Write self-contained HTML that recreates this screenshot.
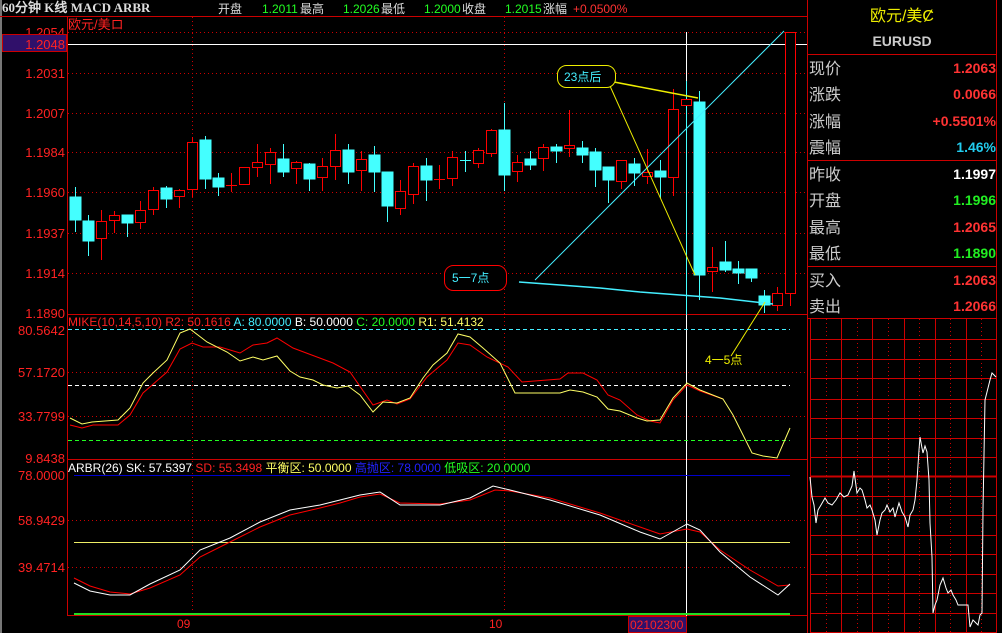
<!DOCTYPE html>
<html><head><meta charset="utf-8"><style>
html,body{margin:0;padding:0;background:#000;width:1002px;height:633px;overflow:hidden}
svg{display:block}
text{font-family:"Liberation Sans","WenQuanYi Zen Hei",sans-serif}
</style></head><body>
<svg width="1002" height="633" viewBox="0 0 1002 633" xmlns="http://www.w3.org/2000/svg" font-size="12">
<rect width="1002" height="633" fill="#000"/>
<rect x="0" y="0" width="2" height="633" fill="#777"/>
<!-- top bar -->
<text x="2" y="12" fill="#ddd" font-weight="bold" style="font-family:'Liberation Serif','WenQuanYi Zen Hei',serif;font-size:13px">60分钟 K线 MACD ARBR</text>
<text x="218" y="13" fill="#ddd">开盘</text>
<text x="262" y="13" fill="#2f2">1.2011</text><text x="300" y="13" fill="#ddd">最高</text>
<text x="343" y="13" fill="#2f2">1.2026</text><text x="381" y="13" fill="#ddd">最低</text>
<text x="424" y="13" fill="#2f2">1.2000</text><text x="462" y="13" fill="#ddd">收盘</text>
<text x="505" y="13" fill="#2f2">1.2015</text><text x="543" y="13" fill="#ddd">涨幅</text>
<text x="573" y="13" fill="#f33">+0.0500%</text>
<line x1="0" y1="16.5" x2="808" y2="16.5" stroke="#c00"/>
<!-- frames -->
<line x1="67.5" y1="17" x2="67.5" y2="615" stroke="#c00"/>
<line x1="807.5" y1="0" x2="807.5" y2="633" stroke="#c00"/>
<line x1="67" y1="314.5" x2="808" y2="314.5" stroke="#c00"/>
<line x1="67" y1="459.5" x2="808" y2="459.5" stroke="#c00"/>
<line x1="67" y1="615.5" x2="808" y2="615.5" stroke="#c00"/>
<!-- grid price -->
<g stroke="#c00" stroke-dasharray="1,3">
<line x1="68" y1="32.5" x2="807" y2="32.5"/><line x1="68" y1="73.5" x2="807" y2="73.5"/>
<line x1="68" y1="113.5" x2="807" y2="113.5"/><line x1="68" y1="152.5" x2="807" y2="152.5"/>
<line x1="68" y1="192.5" x2="807" y2="192.5"/><line x1="68" y1="233.5" x2="807" y2="233.5"/>
<line x1="68" y1="273.5" x2="807" y2="273.5"/>
<line x1="192.5" y1="17" x2="192.5" y2="615"/><line x1="504.5" y1="17" x2="504.5" y2="615"/>
<line x1="68" y1="372.5" x2="807" y2="372.5"/><line x1="68" y1="416.5" x2="807" y2="416.5"/>
<line x1="68" y1="520.5" x2="807" y2="520.5"/><line x1="68" y1="567.5" x2="807" y2="567.5"/>
</g>
<!-- axis labels -->
<g fill="#f22" text-anchor="end" font-size="13">
<text x="65" y="37">1.2054</text>
<rect x="2.5" y="34.5" width="64" height="17" fill="#30106a" stroke="#c00"/>
<text x="65" y="49">1.2048</text>
<text x="65" y="78">1.2031</text><text x="65" y="118">1.2007</text><text x="65" y="157">1.1984</text>
<text x="65" y="197">1.1960</text><text x="65" y="238">1.1937</text><text x="65" y="278">1.1914</text>
<text x="65" y="318">1.1890</text>
<text x="65" y="335">80.5642</text><text x="65" y="377">57.1720</text><text x="65" y="421">33.7799</text>
<text x="65" y="463">9.8438</text>
<text x="65" y="480">78.0000</text><text x="65" y="525">58.9429</text><text x="65" y="572">39.4714</text>
</g>
<text x="68" y="29" fill="#f22" font-size="13">欧元/美ロ</text>
<line x1="68" y1="44.5" x2="807" y2="44.5" stroke="#fff"/>
<line x1="686.5" y1="32" x2="686.5" y2="633" stroke="#fff"/>
<!-- candles -->
<g stroke-width="1">
<g stroke="#4ff" fill="#4ff">
<line x1="75.5" y1="187" x2="75.5" y2="232"/><rect x="70" y="197" width="11" height="23"/>
<line x1="88.5" y1="215" x2="88.5" y2="256"/><rect x="83" y="221" width="11" height="20"/>
<line x1="127.5" y1="215" x2="127.5" y2="237"/><rect x="122" y="215" width="11" height="8"/>
<line x1="166.5" y1="186" x2="166.5" y2="208"/><rect x="161" y="188" width="11" height="11"/>
<line x1="205.5" y1="136" x2="205.5" y2="189"/><rect x="200" y="140" width="11" height="39"/>
<line x1="218.5" y1="173" x2="218.5" y2="196"/><rect x="213" y="178" width="11" height="9"/>
<line x1="283.5" y1="144" x2="283.5" y2="177"/><rect x="278" y="159" width="11" height="13"/>
<line x1="309.5" y1="163" x2="309.5" y2="191"/><rect x="304" y="164" width="11" height="15"/>
<line x1="348.5" y1="144" x2="348.5" y2="184"/><rect x="343" y="150" width="11" height="22"/>
<line x1="374.5" y1="146" x2="374.5" y2="192"/><rect x="369" y="155" width="11" height="17"/>
<line x1="387.5" y1="172" x2="387.5" y2="222"/><rect x="382" y="172" width="11" height="34"/>
<line x1="426.5" y1="158" x2="426.5" y2="201"/><rect x="421" y="166" width="11" height="14"/>
<line x1="465.5" y1="151" x2="465.5" y2="172"/><line x1="460" y1="160.5" x2="471" y2="160.5"/>
<line x1="504.5" y1="103" x2="504.5" y2="191"/><rect x="499" y="130" width="11" height="45"/>
<line x1="530.5" y1="151" x2="530.5" y2="170"/><rect x="525" y="159" width="11" height="6"/>
<line x1="556.5" y1="144" x2="556.5" y2="163"/><rect x="551" y="147" width="11" height="4"/>
<line x1="582.5" y1="141" x2="582.5" y2="163"/><rect x="577" y="148" width="11" height="7"/>
<line x1="595.5" y1="148" x2="595.5" y2="187"/><rect x="590" y="152" width="11" height="18"/>
<line x1="608.5" y1="180" x2="608.5" y2="203"/><rect x="603" y="167" width="11" height="13"/>
<line x1="634.5" y1="158" x2="634.5" y2="186"/><rect x="629" y="164" width="11" height="9"/>
<line x1="660.5" y1="160" x2="660.5" y2="198"/><rect x="655" y="171" width="11" height="6"/>
<line x1="686.5" y1="81" x2="686.5" y2="315"/>
<line x1="699.5" y1="91" x2="699.5" y2="300"/><rect x="694" y="102" width="11" height="173"/>
<line x1="725.5" y1="241" x2="725.5" y2="272"/><rect x="720" y="262" width="11" height="8"/>
<line x1="738.5" y1="261" x2="738.5" y2="284"/><rect x="733" y="269" width="11" height="4"/>
<line x1="751.5" y1="269" x2="751.5" y2="282"/><rect x="746" y="269" width="11" height="9"/>
<line x1="764.5" y1="290" x2="764.5" y2="313"/><rect x="759" y="296" width="11" height="9"/>
</g>
<g stroke="#f00" fill="#000">
<line x1="101.5" y1="210" x2="101.5" y2="260"/><rect x="96.5" y="221.5" width="10" height="17"/>
<line x1="114.5" y1="211" x2="114.5" y2="233"/><rect x="109.5" y="215.5" width="10" height="5"/>
<line x1="140.5" y1="201" x2="140.5" y2="229"/><rect x="135.5" y="210.5" width="10" height="12"/>
<line x1="153.5" y1="187" x2="153.5" y2="215"/><rect x="148.5" y="190.5" width="10" height="19"/>
<line x1="179.5" y1="189" x2="179.5" y2="208"/><rect x="174.5" y="190.5" width="10" height="6"/>
<line x1="192.5" y1="137" x2="192.5" y2="197"/><rect x="187.5" y="142.5" width="10" height="47"/>
<line x1="231.5" y1="173" x2="231.5" y2="192"/><line x1="226" y1="185.5" x2="237" y2="185.5"/>
<rect x="239.5" y="167.5" width="10" height="17"/>
<line x1="257.5" y1="144" x2="257.5" y2="177"/><rect x="252.5" y="162.5" width="10" height="5"/>
<line x1="270.5" y1="148" x2="270.5" y2="184"/><rect x="265.5" y="152.5" width="10" height="12"/>
<line x1="296.5" y1="161" x2="296.5" y2="184"/><rect x="291.5" y="162.5" width="10" height="6"/>
<line x1="322.5" y1="158" x2="322.5" y2="191"/><rect x="317.5" y="166.5" width="10" height="11"/>
<line x1="335.5" y1="134" x2="335.5" y2="180"/><rect x="330.5" y="150.5" width="10" height="16"/>
<line x1="361.5" y1="151" x2="361.5" y2="191"/><rect x="356.5" y="159.5" width="10" height="11"/>
<line x1="400.5" y1="180" x2="400.5" y2="215"/><rect x="395.5" y="191.5" width="10" height="17"/>
<line x1="413.5" y1="163" x2="413.5" y2="204"/><rect x="408.5" y="166.5" width="10" height="28"/>
<line x1="439.5" y1="165" x2="439.5" y2="189"/><line x1="434" y1="179.5" x2="445" y2="179.5"/>
<line x1="452.5" y1="151" x2="452.5" y2="186"/><rect x="447.5" y="157.5" width="10" height="21"/>
<line x1="478.5" y1="148" x2="478.5" y2="168"/><rect x="473.5" y="150.5" width="10" height="13"/>
<line x1="491.5" y1="129" x2="491.5" y2="157"/><rect x="486.5" y="130.5" width="10" height="23"/>
<line x1="517.5" y1="155" x2="517.5" y2="182"/><rect x="512.5" y="162.5" width="10" height="9"/>
<line x1="543.5" y1="144" x2="543.5" y2="171"/><rect x="538.5" y="147.5" width="10" height="11"/>
<line x1="569.5" y1="110" x2="569.5" y2="157"/><rect x="564.5" y="145.5" width="10" height="3"/>
<line x1="621.5" y1="160" x2="621.5" y2="189"/><rect x="616.5" y="160.5" width="10" height="21"/>
<line x1="647.5" y1="149" x2="647.5" y2="184"/><rect x="642.5" y="172.5" width="10" height="4"/>
<line x1="673.5" y1="89" x2="673.5" y2="196"/><rect x="668.5" y="109.5" width="10" height="68"/>
<rect x="681.5" y="99.5" width="10" height="6"/>
<line x1="712.5" y1="247" x2="712.5" y2="292"/><rect x="707.5" y="267.5" width="10" height="4"/>
<line x1="777.5" y1="287" x2="777.5" y2="311"/><rect x="772.5" y="293.5" width="10" height="12"/>
<line x1="790.5" y1="293" x2="790.5" y2="306"/><rect x="785.5" y="32.5" width="10" height="261"/>
</g>
</g>
<!-- annotations -->
<polyline points="519,282 560,285 600,288 640,292 680,295 720,298 773,304" fill="none" stroke="#4ef" stroke-width="1.5"/>
<line x1="535" y1="280" x2="784" y2="31" stroke="#4ef"/>
<polyline points="614,82 698,98" fill="none" stroke="#ee0" stroke-width="1.5"/>
<line x1="610" y1="86" x2="695" y2="275" stroke="#ee0"/>
<line x1="765" y1="302" x2="731" y2="356" stroke="#ee0"/>
<rect x="557.5" y="65.5" width="58" height="22" rx="9" fill="#000" stroke="#ee0"/>
<text x="564" y="81" fill="#4ef">23点后</text>
<rect x="444.5" y="265.5" width="62" height="25" rx="9" fill="#000" stroke="#f00"/>
<text x="452" y="282" fill="#4ef">5一7点</text>
<text x="705" y="364" fill="#ee0">4一5点</text>
<!-- MIKE -->
<text x="68" y="326" fill="#f22">MIKE(10,14,5,10) R2: 50.1616 <tspan fill="#4ef">A: 80.0000</tspan> <tspan fill="#fff">B: 50.0000</tspan> <tspan fill="#2f2">C: 20.0000</tspan> <tspan fill="#ff6">R1: 51.4132</tspan></text>
<line x1="68" y1="329.5" x2="790" y2="329.5" stroke="#4ef" stroke-dasharray="4,3"/>
<line x1="68" y1="385.5" x2="790" y2="385.5" stroke="#fff" stroke-dasharray="4,3"/>
<line x1="68" y1="440.5" x2="790" y2="440.5" stroke="#2f2" stroke-dasharray="4,3"/>
<polyline fill="none" stroke="#f00" points="70,425 82,428 93,425 118,425 130,415 143,393 167,372 180,349 192,343 203,347 220,347 240,353 253,345 267,343 277,338 293,348 317,357 333,363 350,372 373,405 387,400 397,404 410,399 427,377 447,360 458,343 470,345 487,357 508,367 522,382 560,379 568,373 583,373 597,380 608,395 620,400 637,415 650,421 660,423 673,400 687,385 700,391 723,399"/>
<polyline fill="none" stroke="#ff6" points="70,418 82,424 92,422 118,420 130,408 143,383 153,373 167,360 180,333 190,329 207,342 227,352 240,361 253,357 263,360 277,356 290,371 300,377 313,380 323,385 337,388 348,386 360,395 373,412 383,402 397,403 410,398 423,378 433,365 447,353 458,334 470,337 483,348 500,363 515,393 560,393 570,390 583,392 597,397 608,409 620,411 637,418 647,421 660,420 673,398 687,383 700,390 723,399 733,415 752,453 763,456 777,458 790,428"/>
<!-- ARBR -->
<text x="68" y="472" fill="#fff">ARBR(26) SK: 57.5397 <tspan fill="#f22">SD: 55.3498</tspan> <tspan fill="#ff6">平衡区: 50.0000</tspan> <tspan fill="#22f">高抛区: 78.0000</tspan> <tspan fill="#2f2">低吸区: 20.0000</tspan></text>
<line x1="74" y1="475.5" x2="790" y2="475.5" stroke="#00c"/>
<line x1="74" y1="542.5" x2="790" y2="542.5" stroke="#ee6"/>
<line x1="74" y1="614" x2="790" y2="614" stroke="#2d2" stroke-width="2"/>
<polyline fill="none" stroke="#f00" points="74,578 90,586 110,592 130,594 150,588 180,575 200,557 230,542 260,527 290,515 320,508 340,503 360,497 380,494 400,503 440,504 470,500 495,490 510,491 550,498 600,513 640,527 660,534 687,529 700,532 720,550 750,570 778,586 790,585"/>
<polyline fill="none" stroke="#fff" points="74,583 90,591 110,595 130,595 150,584 180,570 200,550 230,538 260,522 290,510 320,505 340,500 360,495 380,492 400,505 440,505 470,498 493,486 510,490 550,500 600,515 640,532 660,539 687,524 700,530 720,552 750,577 778,595 790,584"/>
<!-- bottom axis -->
<text x="177" y="628" fill="#f22">09</text>
<text x="489" y="628" fill="#f22">10</text>
<rect x="628.5" y="616.5" width="58" height="16" fill="#30106a" stroke="#c00"/>
<text x="630" y="629" fill="#f22">02102300</text>
<!-- right panel -->
<line x1="996.5" y1="0" x2="996.5" y2="633" stroke="#c00"/>
<text x="902" y="21" fill="#ee0" font-size="16" text-anchor="middle">欧元/美Ȼ</text>
<text x="902" y="46" fill="#ccc" font-size="14" font-weight="bold" text-anchor="middle">EURUSD</text>
<g stroke="#c00"><line x1="808" y1="54.5" x2="997" y2="54.5"/><line x1="808" y1="160.5" x2="997" y2="160.5"/><line x1="808" y1="266.5" x2="997" y2="266.5"/><line x1="808" y1="318.5" x2="997" y2="318.5"/></g>
<g fill="#ccc" font-size="16"><text x="809" y="74">现价</text><text x="809" y="100">涨跌</text><text x="809" y="127">涨幅</text><text x="809" y="153">震幅</text>
<text x="809" y="180">昨收</text><text x="809" y="206">开盘</text><text x="809" y="233">最高</text><text x="809" y="259">最低</text>
<text x="809" y="286">买入</text><text x="809" y="312">卖出</text></g>
<g font-size="14" font-weight="bold" text-anchor="end"><text x="996" y="73" fill="#f33">1.2063</text><text x="996" y="99" fill="#f33">0.0066</text>
<text x="996" y="126" fill="#f33">+0.5501%</text><text x="996" y="152" fill="#2ce">1.46%</text>
<text x="996" y="179" fill="#fff">1.1997</text><text x="996" y="205" fill="#2e2">1.1996</text>
<text x="996" y="232" fill="#f33">1.2065</text><text x="996" y="258" fill="#2e2">1.1890</text>
<text x="996" y="285" fill="#f33">1.2063</text><text x="996" y="311" fill="#f33">1.2066</text></g>
<!-- mini chart -->
<g stroke="#c00">
<line x1="810.5" y1="319" x2="810.5" y2="633"/><line x1="841.5" y1="319" x2="841.5" y2="633"/><line x1="872.5" y1="319" x2="872.5" y2="633"/>
<line x1="904.5" y1="319" x2="904.5" y2="633"/><line x1="935.5" y1="319" x2="935.5" y2="633"/><line x1="966.5" y1="319" x2="966.5" y2="633"/>
<g>
<line x1="810" y1="339.5" x2="997" y2="339.5"/><line x1="810" y1="359.5" x2="997" y2="359.5"/><line x1="810" y1="378.5" x2="997" y2="378.5"/>
<line x1="810" y1="399.5" x2="997" y2="399.5"/><line x1="810" y1="418.5" x2="997" y2="418.5"/><line x1="810" y1="438.5" x2="997" y2="438.5"/>
<line x1="810" y1="457.5" x2="997" y2="457.5"/><line x1="810" y1="496.5" x2="997" y2="496.5"/><line x1="810" y1="515.5" x2="997" y2="515.5"/>
<line x1="810" y1="535.5" x2="997" y2="535.5"/><line x1="810" y1="554.5" x2="997" y2="554.5"/><line x1="810" y1="574.5" x2="997" y2="574.5"/>
<line x1="810" y1="593.5" x2="997" y2="593.5"/><line x1="810" y1="613.5" x2="997" y2="613.5"/><line x1="810" y1="632.5" x2="997" y2="632.5"/>
</g>
<line x1="810" y1="476.5" x2="997" y2="476.5" stroke-width="2"/>
<g stroke-dasharray="1,3"><line x1="826.5" y1="319" x2="826.5" y2="633"/><line x1="857.5" y1="319" x2="857.5" y2="633"/><line x1="888.5" y1="319" x2="888.5" y2="633"/>
<line x1="919.5" y1="319" x2="919.5" y2="633"/><line x1="950.5" y1="319" x2="950.5" y2="633"/><line x1="981.5" y1="319" x2="981.5" y2="633"/></g>
</g>
<polyline fill="none" stroke="#fff" points="810,477 812,497 814,505 816,523 818,510 821,505 825,498 828,503 832,505 836,500 840,493 844,497 848,495 852,486 854,471 857,493 860,488 862,490 865,500 867,508 870,505 872,510 875,520 877,535 880,520 882,513 885,510 887,505 890,512 893,508 895,517 899,503 902,512 905,517 908,527 910,515 913,510 915,500 917,480 919,450 920,437 922,448 923,453 925,446 927,452 929,480 930,523 932,557 933,613 935,605 937,600 940,585 943,578 946,588 948,593 951,590 953,595 956,600 958,605 968,605 970,627 973,620 975,622 978,625 980,615 982,613 983,510 985,400 988,388 990,380 992,373 996,377"/>
</svg>
</body></html>
